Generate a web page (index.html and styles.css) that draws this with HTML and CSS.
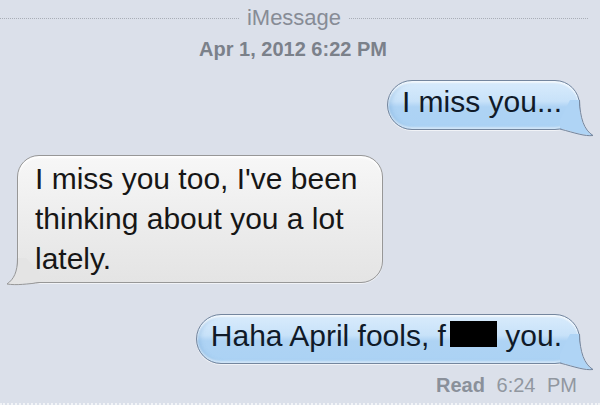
FILE: index.html
```html
<!DOCTYPE html>
<html lang="en">
<head>
  <meta charset="UTF-8" />
  <meta name="viewport" content="width=device-width, initial-scale=1.0" />
  <title>iMessage</title>
  <link rel="stylesheet" href="styles.css">
</head>
<body>
  <div class="thread">
    <div class="service">
      <span class="rule"></span>
      <span class="service-name">iMessage</span>
      <span class="rule"></span>
    </div>
    <div class="stamp">Apr 1, 2012 6:22 PM</div>

    <div class="row sent first">
      <div class="bubble blue">
        I miss you...
        <svg class="tail tail-right" width="36" height="40" viewBox="0 0 36 40">
          <path class="tail-fill" d="M19,0 C19.5,18 23.5,30 32,35 C25,35.5 15,32.5 0,28.5 L0,20 L10,0 Z"/>
          <path class="tail-line" d="M19.5,0 C20,18 24,30 33,35.5 C25,36.5 15,33 0,29"/>
        </svg>
      </div>
    </div>

    <div class="row received">
      <div class="bubble gray">
        I miss you too, I've been thinking about you a lot lately.
        <svg class="tail tail-left" width="40" height="33" viewBox="0 0 40 33">
          <path class="tail-fill" d="M14,3 C14,17 10.5,24 3.5,28.8 C12,30 24,28.5 36,27 L36,18 L22,3 Z"/>
          <path class="tail-line" d="M13.5,3 C13.5,17 10,24 3,29 C12,30.5 24,29 36,27.5"/>
        </svg>
      </div>
    </div>

    <div class="row sent last">
      <div class="bubble blue">
        Haha April fools, f<span class="censor"></span> you.
        <svg class="tail tail-right" width="36" height="40" viewBox="0 0 36 40">
          <path class="tail-fill" d="M19,0 C19.5,18 23.5,30 32,35 C25,35.5 15,32.5 0,28.5 L0,20 L10,0 Z"/>
          <path class="tail-line" d="M19.5,0 C20,18 24,30 33,35.5 C25,36.5 15,33 0,29"/>
        </svg>
      </div>
    </div>

    <div class="receipt"><strong>Read</strong> 6:24 PM</div>
    <div class="rule bottom"></div>
  </div>
</body>
</html>
```

FILE: styles.css
```css
* {
  margin: 0;
  padding: 0;
  box-sizing: border-box;
}

body {
  font-family: 'Liberation Sans', Arial, sans-serif;
  background-color: #dbe0ea;
  color: #1c2431;
  overflow: hidden;
}

.thread {
  display: flex;
  flex-direction: column;
  height: 405px;
}

.service {
  display: flex;
  align-items: center;
  gap: 8px;
  padding-top: 5px;
  padding-right: 12px;
  height: 31px;
}

.service-name {
  font-size: 22px;
  line-height: 26px;
  color: #878c96;
}

.rule {
  flex: 1;
  border-top: 1px dotted #a9aeb7;
}

.stamp {
  margin-top: 6px;
  padding-right: 14px;
  font-size: 20px;
  line-height: 24px;
  font-weight: bold;
  color: #7b818a;
  text-align: center;
}

.row {
  display: flex;
}

.row.sent {
  justify-content: flex-end;
  padding-right: 20px;
}

.row.first {
  margin-top: 19px;
}

.row.received {
  margin-top: 25px;
  padding-left: 17px;
}

.row.last {
  margin-top: 31px;
}

.bubble {
  position: relative;
  font-size: 30px;
}

.bubble.blue {
  padding: 3px 17px 9px 14px;
  line-height: 36px;
  border: 1px solid #74869e;
  border-radius: 25px;
  background: linear-gradient(#d9ecfc 0%, #c8e2f9 42%, #aed3f4 54%, #abd2f4 100%);
  box-shadow: inset 0 2px 2px rgba(255,255,255,0.8), inset 0 -2px 2px rgba(255,255,255,0.5), inset 3px 0 4px rgba(110,160,210,0.35), 0 1px 0 rgba(255,255,255,0.6);
  color: #101a28;
}

.bubble.gray {
  width: 366px;
  padding: 3px 21px 3px 17px;
  line-height: 40px;
  border: 1px solid #979797;
  border-radius: 22px;
  background: linear-gradient(#f7f7f7 0%, #ececec 55%, #e4e4e4 100%);
  box-shadow: inset 0 2px 2px rgba(255,255,255,0.9), 0 1px 0 rgba(255,255,255,0.6);
  color: #161616;
}

.censor {
  display: inline-block;
  width: 47px;
  height: 26px;
  margin-left: 4px;
  vertical-align: -1px;
  background-color: #000;
}

.tail {
  position: absolute;
  overflow: visible;
}

.tail-right {
  right: -17px;
  bottom: -11px;
}

.tail-left {
  left: -14px;
  bottom: -6px;
}

.tail-line {
  fill: none;
  stroke-width: 1;
}

.blue .tail-fill {
  fill: #afd4f5;
}

.blue .tail-line {
  stroke: #74869e;
}

.gray .tail-fill {
  fill: #e4e4e4;
}

.gray .tail-line {
  stroke: #979797;
}

.receipt {
  margin-top: 9px;
  padding-right: 23px;
  text-align: right;
  font-size: 20px;
  line-height: 24px;
  color: #9197a0;
  word-spacing: 6px;
}

.receipt strong {
  color: #8a909a;
}

.rule.bottom {
  flex: none;
  margin-top: 6px;
  border-top: 2px dotted #f2f4f7;
}
```
